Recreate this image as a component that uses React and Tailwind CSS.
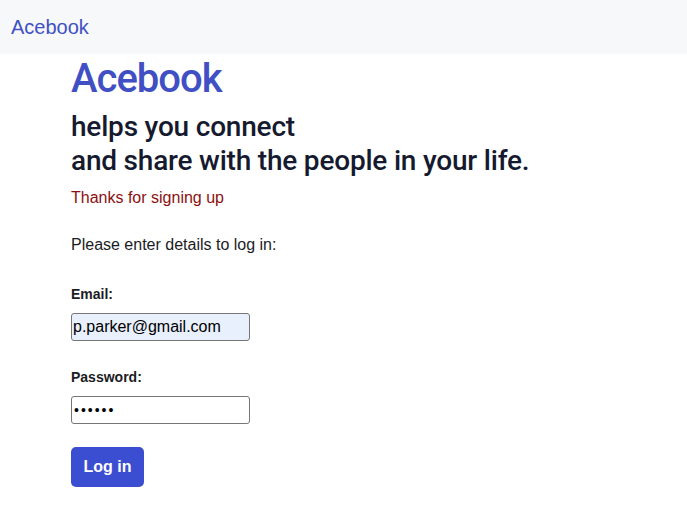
export default function App() {
  return (
    <div className="min-h-[520px] bg-white font-['Liberation_Sans',Arial,sans-serif] text-[#1b1c24]">
      <nav className="flex h-[54px] items-center bg-[#f7f8fa] px-[11px]">
        <span className="text-[20px] leading-[28px] text-[#4050c4]">Acebook</span>
      </nav>
      <main className="pl-[71px]">
        <h1 className="mt-[3px] font-['Roboto',Arial,sans-serif] text-[40px] font-medium leading-[44px] tracking-tight text-[#4050c4]">Acebook</h1>
        <h2 className="mt-[9px] font-['Roboto',Arial,sans-serif] text-[28px] font-medium leading-[34px] tracking-[-0.2px] text-[#161a2e]">
          helps you connect
          <br />
          and share with the people in your life.
        </h2>
        <p className="mt-[8px] text-[16px] leading-[24px] text-[#8b1010]">Thanks for signing up</p>
        <p className="mt-[23px] text-[16px] leading-[24px]">Please enter details to log in:</p>
        <form className="flex flex-col items-start" onSubmit={(e) => e.preventDefault()}>
          <label className="mt-[27px] text-[14px] font-bold leading-[20px]">Email:</label>
          <input
            type="text"
            defaultValue="p.parker@gmail.com"
            className="mt-[9px] h-[28px] w-[179px] rounded-[3px] border border-[#767676] bg-[#e8f0fe] px-[1px] text-[16px] text-black outline-none"
          />
          <label className="mt-[26px] text-[14px] font-bold leading-[20px]">Password:</label>
          <input
            type="password"
            defaultValue="123456"
            className="mt-[9px] h-[28px] w-[179px] rounded-[3px] border border-[#767676] bg-white px-[2px] text-[14px] tracking-[2px] text-black outline-none"
          />
          <button
            type="submit"
            className="mt-[23px] h-[40px] w-[73px] rounded-[5px] bg-[#3b4dd0] text-[16px] font-bold text-white"
          >
            Log in
          </button>
        </form>
      </main>
    </div>
  );
}
